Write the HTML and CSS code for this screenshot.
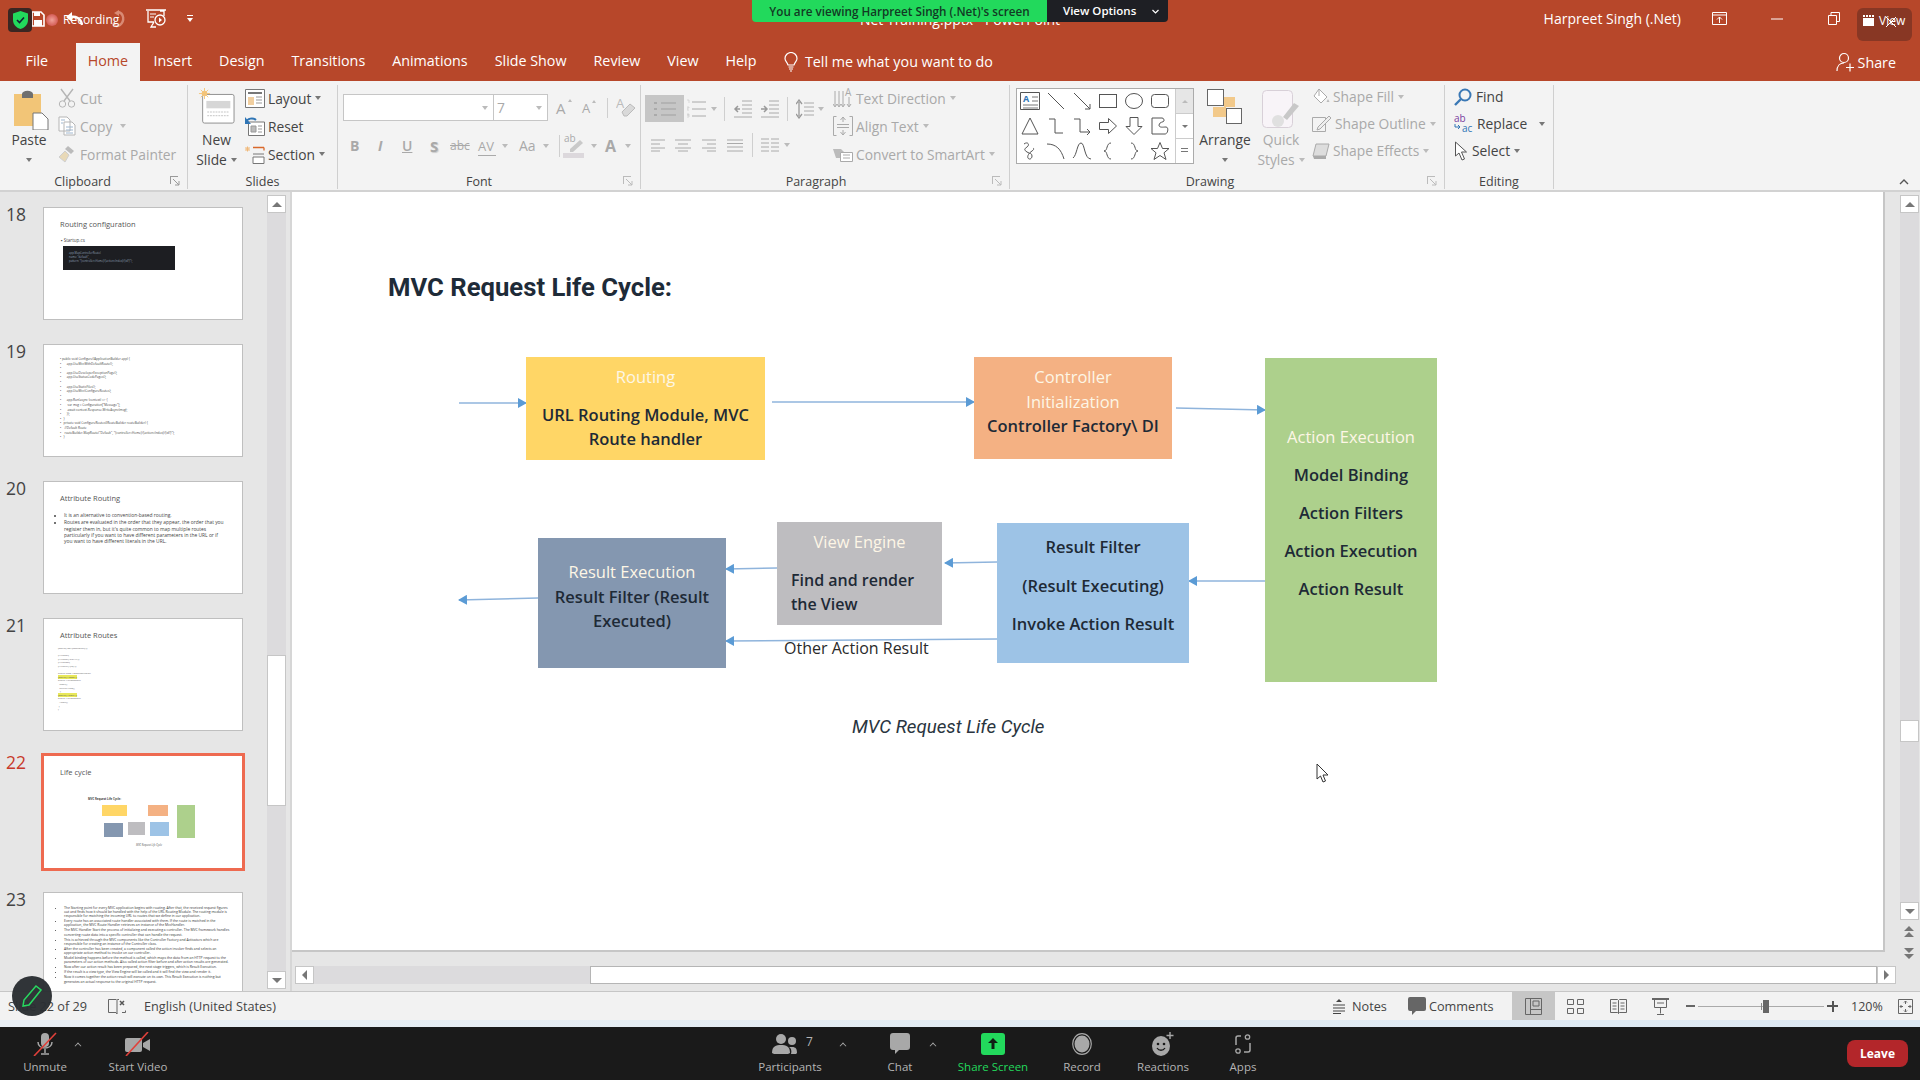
FILE: index.html
```html
<!DOCTYPE html>
<html lang="en">
<head>
<meta charset="utf-8">
<title>Net Training.pptx - PowerPoint</title>
<link rel="stylesheet" href="styles.css">
</head>
<body>
<div class="app">

<header class="titlebar">
  <div class="tb-left">
    <svg class="i-save" width="14" height="16" viewBox="0 0 14 16"><path d="M1 1h9l3 3v11H1z" fill="none" stroke="#fff" stroke-width="1.6"/><rect x="3" y="9" width="8" height="6" fill="#fff"/><rect x="3" y="1" width="6" height="4" fill="#fff"/></svg>
    <svg class="i-undo" width="18" height="16" viewBox="0 0 18 16"><path d="M17 14C16 7 11 5 5 6" fill="none" stroke="#fff" stroke-width="2.4"/><path d="M7 1 1 6l6 5z" fill="#fff"/></svg>
    <svg class="i-redo" width="15" height="18" viewBox="0 0 15 18"><path d="M7 2C13 3 14 11 9 15 6 17 3 16 2 13" fill="none" stroke="#d98a74" stroke-width="2.4"/><path d="M8 0v6L3 3z" fill="#d98a74"/></svg>
    <svg class="i-show" width="20" height="20" viewBox="0 0 20 20"><path d="M0 1h20M2 2v11h6M10 18H5l3-5M14 2h4v5" fill="none" stroke="#fff" stroke-width="1.3"/><circle cx="14" cy="11" r="5" fill="none" stroke="#fff" stroke-width="1.3"/><path d="M13 8.500v5l3-2.500z" fill="#fff"/><path d="M4 5h6M4 8h4" stroke="#fff"/></svg>
    <svg class="i-qa" width="6" height="7" viewBox="0 0 6 7"><path d="M0 0h6v1H0zM0 3h6L3 7z" fill="#fff"/></svg>
  </div>
  <div class="doc-title">Net Training.pptx - PowerPoint</div>
  <div class="tb-right">
    <span class="user">Harpreet Singh (.Net)</span>
    <svg class="i-rd" width="15" height="13" viewBox="0 0 15 13"><path d="M.5.5h14v12H.5zM.5 3h14M7.500 11V5M5 7.500l2.500-2.500L10 7.500" fill="none" stroke="#fff"/></svg>
    <svg class="i-min" width="12" height="2" viewBox="0 0 12 2"><path d="M0 1h12" stroke="#fff"/></svg>
    <svg class="i-max" width="12" height="13" viewBox="0 0 12 13"><path d="M.5 3.500h8v9h-8zM3 3.500V.5h8.500v9H8.500" fill="none" stroke="#fff"/></svg>
  </div>
</header>

<nav class="tabs">
  <span class="tab">File</span>
  <span class="tab tab-on">Home</span>
  <span class="tab">Insert</span>
  <span class="tab">Design</span>
  <span class="tab">Transitions</span>
  <span class="tab">Animations</span>
  <span class="tab">Slide Show</span>
  <span class="tab">Review</span>
  <span class="tab">View</span>
  <span class="tab">Help</span>
  <svg class="i-bulb" width="14" height="20" viewBox="0 0 14 20"><path d="M4 13C3 10 1 9 1 6.500a6 6 0 0 1 12 0C13 9 11 10 10 13z" fill="none" stroke="#fff" stroke-width="1.2"/><path d="M4.500 15h5M5 17h4M6 19h2" stroke="#fff" stroke-width="1.200"/></svg>
  <span class="tell">Tell me what you want to do</span>
  <span class="share">
    <svg width="18" height="20" viewBox="0 0 18 20"><circle cx="8" cy="6" r="4.500" fill="none" stroke="#fff" stroke-width="1.200"/><path d="M1 19c0-5 3-8 7-8M10 15.500h8M14 11.500v8" fill="none" stroke="#fff" stroke-width="1.200"/></svg>
    Share
  </span>
</nav>

<section class="ribbon">
  <div class="group g-clip">
    <div class="g-body">
      <div class="big b-paste">
        <svg width="36" height="40" viewBox="0 0 36 40"><rect x="1" y="4" width="27" height="32" fill="#f2c577"/><path d="M9 4a5 3 0 0 1 11 0v4H9z" fill="#6f6f6f"/><path d="M20 23h9l6 6v11H20z" fill="#fff" stroke="#777"/></svg>
        <span class="big-l">Paste</span>
        <span class="drop"></span>
      </div>
      <div class="stack off">
        <div class="row"><svg class="ic" width="18" height="20" viewBox="0 0 18 20"><path d="M3 1l9 12M15 1L6 13" stroke="#b5b5b5" stroke-width="1.400"/><circle cx="4.500" cy="16" r="3.200" fill="none" stroke="#b5b5b5"/><circle cx="13.500" cy="16" r="3.200" fill="none" stroke="#b5b5b5"/></svg>Cut</div>
        <div class="row"><svg class="ic" width="18" height="20" viewBox="0 0 18 20"><path d="M1 1h8l3 3v11H1zM6 6h8l3 3v10H6z" fill="#fff" stroke="#b5b5b5"/><path d="M8 11h7M8 14h7M8 17h7M3 4h4M3 7h2" stroke="#9fb7d0"/></svg>Copy<span class="drop ml8"></span></div>
        <div class="row"><svg class="ic" width="18" height="18" viewBox="0 0 18 18"><path d="M10 1l6 5-3 3-6-5z" fill="#bbb"/><path d="M7 6l4 4-4 7-6-5z" fill="#e8d9b8" stroke="#cfcfcf"/></svg>Format Painter</div>
      </div>
    </div>
    <div class="g-label">Clipboard<svg class="launch" width="10" height="10" viewBox="0 0 10 10"><path d="M0 .5h8M.5 0v8M3 3l6 6M9 5v4H5" fill="none" stroke="#999"/></svg></div>
  </div>

  <div class="group g-slides">
    <div class="g-body">
      <div class="big b-new">
        <svg width="37" height="36" viewBox="0 0 40 39"><rect x="5" y="7" width="34" height="31" rx="2" fill="#fff" stroke="#8a8a8a"/><rect x="9" y="14" width="26" height="8" fill="#d6d6d6"/><path d="M10 26h24M10 30h24" stroke="#c0c0c0" stroke-dasharray="2 1"/><circle cx="7" cy="6" r="3" fill="#f3c47a"/><path d="M7 0v12M1 6h12M3 2l8 8M11 2l-8 8" stroke="#f3c47a"/></svg>
        <span class="big-l">New</span>
        <span class="big-l">Slide<span class="drop ml3"></span></span>
      </div>
      <div class="stack">
        <div class="row"><svg class="ic2" width="20" height="19" viewBox="0 0 20 19"><path d="M.5.5h19v18H.5z" fill="#fff" stroke="#777"/><path d="M3 4h14" stroke="#777" stroke-width="2"/><path d="M3 8h6v8H3z" fill="#f1cfa0"/><path d="M11 8h6M11 11h6M11 14h6" stroke="#999"/></svg>Layout<span class="drop ml3"></span></div>
        <div class="row"><svg class="ic2" width="20" height="19" viewBox="0 0 20 19"><path d="M3.500 5h16v13.500h-16z" fill="#fff" stroke="#777"/><path d="M6 9h5v6H6zM13 9h4M13 12h4M13 15h4" fill="#bbb" stroke="#999"/><path d="M1 5a6 5 0 0 1 10-2" fill="none" stroke="#2f75b5" stroke-width="2"/><path d="M0 0v7h6z" fill="#2f75b5"/></svg>Reset</div>
        <div class="row"><svg class="ic2" width="20" height="19" viewBox="0 0 20 19"><path d="M0 4h5M2.500 1.500v5M.500 2l4 4M4.500 2l-4 4" stroke="#f0b878"/><path d="M8 2.500h11M19 2.500v3" fill="none" stroke="#d9682b" stroke-width="1.300"/><path d="M8 9h11M8 12h11v6.500H8z" fill="#fff" stroke="#777"/></svg>Section<span class="drop ml3"></span></div>
      </div>
    </div>
    <div class="g-label">Slides</div>
  </div>

  <div class="group g-font">
    <div class="g-body col off">
      <div class="font-top">
        <div class="combo c-name"><span class="drop"></span></div>
        <div class="combo c-size">7<span class="drop"></span></div>
        <span class="big-a">A<i class="up"></i></span>
        <span class="small-a">A<i class="up"></i></span>
        <span class="vsep s-font"></span>
        <svg class="i-clear" width="20" height="21" viewBox="0 0 20 21"><text x="0" y="11" font-size="13" fill="#bbb" font-family="Open Sans">A</text><path d="M6 15l8-8 5 4-8 8H8z" fill="#d9d9d9" stroke="#bbb"/></svg>
      </div>
      <div class="font-bot">
        <b class="f-b">B</b><i class="f-i">I</i><u class="f-u">U</u><b class="f-s">S</b><s class="f-abc">abc</s>
        <span class="f-av">AV<i class="av-line"></i></span><span class="drop"></span>
        <span class="f-aa">Aa</span><span class="drop"></span>
        <span class="vsep s-font2"></span>
        <svg class="i-hl" width="22" height="25" viewBox="0 0 22 25"><text x="1" y="9" font-size="10" fill="#aaa" font-family="Open Sans">ab</text><path d="M7 16l10-9 3 3-10 9H7z" fill="#c9c9c9"/><rect x="0" y="20" width="21" height="5" fill="#dcd8dc"/></svg>
        <span class="drop"></span>
        <b class="f-color">A</b><span class="drop"></span>
      </div>
    </div>
    <div class="g-label">Font<svg class="launch faint" width="10" height="10" viewBox="0 0 10 10"><path d="M0 .5h8M.5 0v8M3 3l6 6M9 5v4H5" fill="none" stroke="#bbb"/></svg></div>
  </div>

  <div class="group g-para">
    <div class="g-body">
      <div class="para-grid off">
        <div class="para-top">
          <span class="pbtn-on"><svg width="22" height="16" viewBox="0 0 22 16"><path d="M0 2h3M0 8h3M0 14h3" stroke="#aaa" stroke-width="2"/><path d="M7 2h15M7 8h15M7 14h15" stroke="#a0a0a0"/></svg></span>
          <svg class="i-num" width="20" height="20" viewBox="0 0 20 20"><path d="M5 3h14M5 10h14M5 17h14" stroke="#aaa"/><path d="M0 1h2v3M0 8h2v1H0v2h2M0 15h2v1H0h2v2H0" fill="none" stroke="#ccc" stroke-width=".7"/></svg>
          <span class="drop"></span>
          <span class="vsep s-p1"></span>
          <svg class="i-ind" width="19" height="18" viewBox="0 0 19 18"><path d="M9 1h10M9 5h10M9 9h10M9 13h10M1 17h18" stroke="#aaa"/><path d="M7 9H2M5 6L2 9l3 3" fill="none" stroke="#999" stroke-width="1.500"/></svg>
          <svg class="i-ind2" width="19" height="18" viewBox="0 0 19 18"><path d="M9 1h10M9 5h10M9 9h10M9 13h10M1 17h18" stroke="#aaa"/><path d="M1 9h5M4 6l3 3-3 3" fill="none" stroke="#999" stroke-width="1.500"/></svg>
          <span class="vsep s-p2"></span>
          <svg class="i-ls" width="18" height="20" viewBox="0 0 18 20"><path d="M8 4h10M8 8h10M8 12h10M8 16h10" stroke="#aaa"/><path d="M3 3v14M0 5l3-4 3 4M0 15l3 4 3-4" fill="none" stroke="#999" stroke-width="1.300"/></svg>
          <span class="drop"></span>
        </div>
        <div class="para-bot">
          <svg class="al1" width="14" height="13" viewBox="0 0 14 13"><path d="M0 1h14M0 5h9M0 9h14M0 12h9" stroke="#aaa"/></svg>
          <svg class="al2" width="16" height="13" viewBox="0 0 16 13"><path d="M0 1h16M3 5h10M0 9h16M3 12h10" stroke="#aaa"/></svg>
          <svg class="al3" width="14" height="13" viewBox="0 0 14 13"><path d="M0 1h14M5 5h9M0 9h14M5 12h9" stroke="#aaa"/></svg>
          <svg class="al4" width="16" height="13" viewBox="0 0 16 13"><path d="M0 1h16M0 4.500h16M0 8h16M0 12h16" stroke="#aaa"/></svg>
          <span class="vsep s-p3"></span>
          <svg class="i-col" width="18" height="14" viewBox="0 0 18 14"><path d="M0 1h8M10 1h8M0 5h8M10 5h8M0 9h8M10 9h8M0 13h8M10 13h8" stroke="#aaa"/></svg>
          <span class="drop"></span>
        </div>
      </div>
      <div class="stack off st-para">
        <div class="row"><svg class="ic2" width="20" height="22" viewBox="0 0 20 22"><path d="M2 4v15M6 4v15M10 4v15" stroke="#aaa"/><path d="M0 17l2 3 2-3M4 17l2 3 2-3M8 17l2 3 2-3" fill="none" stroke="#aaa"/><text x="12" y="9" font-size="10" fill="#aaa" font-family="Open Sans">A</text><path d="M16 10v9M14 17l2 3 2-3" fill="none" stroke="#aaa"/></svg>Text Direction<span class="drop ml3"></span></div>
        <div class="row"><svg class="ic2" width="20" height="20" viewBox="0 0 20 20"><path d="M3.500.5h-3v19h3M16.500.5h3v19h-3" fill="none" stroke="#aaa"/><path d="M10 1v5M7.500 4L10 1l2.500 3M10 19v-5M7.500 16l2.500 3 2.500-3M4 8.500h12M4 11.500h12" fill="none" stroke="#aaa"/></svg>Align Text<span class="drop ml3"></span></div>
        <div class="row"><svg class="ic2" width="20" height="16" viewBox="0 0 20 16"><path d="M0 3h8l5 5-5 4H3z" fill="#bbb"/><path d="M7.500 6.500h12v9h-12z" fill="#fff" stroke="#aaa"/><path d="M10 9h7M10 12h7" stroke="#aaa"/></svg>Convert to SmartArt<span class="drop ml3"></span></div>
      </div>
    </div>
    <div class="g-label">Paragraph<svg class="launch faint" width="10" height="10" viewBox="0 0 10 10"><path d="M0 .5h8M.5 0v8M3 3l6 6M9 5v4H5" fill="none" stroke="#bbb"/></svg></div>
  </div>

  <div class="group g-draw">
    <div class="g-body">
      <div class="gallery">
        <div class="shapes">
          <svg width="20" height="20" viewBox="0 0 20 20"><path d="M.5 1.500h19v17H.5z" fill="#fff" stroke="#555"/><path d="M12 6h6M12 10h6M3 14h15M3 17h15" stroke="#777"/><text x="3" y="11" font-size="9" font-weight="700" fill="#2f75b5" font-family="Open Sans">A</text></svg>
          <svg width="20" height="20" viewBox="0 0 20 20"><path d="M2 2l16 16" stroke="#555"/></svg>
          <svg width="20" height="20" viewBox="0 0 20 20"><path d="M2 2l16 16M13 18h5v-5" fill="none" stroke="#555"/></svg>
          <svg width="20" height="20" viewBox="0 0 20 20"><rect x="1.500" y="3.500" width="17" height="13" fill="none" stroke="#555"/></svg>
          <svg width="20" height="20" viewBox="0 0 20 20"><ellipse cx="10" cy="10" rx="8.500" ry="7.500" fill="none" stroke="#555"/></svg>
          <svg width="20" height="20" viewBox="0 0 20 20"><rect x="1.500" y="3.500" width="17" height="13" rx="3" fill="none" stroke="#555"/></svg>
          <svg width="20" height="20" viewBox="0 0 20 20"><path d="M10 2l8 16H2z" fill="none" stroke="#555"/></svg>
          <svg width="20" height="20" viewBox="0 0 20 20"><path d="M3 3h6v14h8" fill="none" stroke="#555"/></svg>
          <svg width="20" height="20" viewBox="0 0 20 20"><path d="M2 3h6v13h10M15 13l3 3-3 3" fill="none" stroke="#555"/></svg>
          <svg width="20" height="20" viewBox="0 0 20 20"><path d="M1.500 6.500h9v-4l8 7.500-8 7.500v-4h-9z" fill="none" stroke="#555"/></svg>
          <svg width="20" height="20" viewBox="0 0 20 20"><path d="M6 1.500h8v9h4l-8 8-8-8h4z" fill="none" stroke="#555"/></svg>
          <svg width="20" height="20" viewBox="0 0 20 20"><path d="M2 18V2h10c2 0 2 2 2 3s-5 1-5 4 4 2 7 2 2 7-1 7z" fill="none" stroke="#555"/></svg>
          <svg width="20" height="20" viewBox="0 0 20 20"><path d="M4 3c4-3 6 1 3 3S4 9 7 11s5 1 5 4-3 4-4 2 1-5 4-7 1-3 1-3" fill="none" stroke="#555"/></svg>
          <svg width="20" height="20" viewBox="0 0 20 20"><path d="M1 3c9 0 14 5 17 15" fill="none" stroke="#555"/></svg>
          <svg width="20" height="20" viewBox="0 0 20 20"><path d="M1 17C5 14 5 2 9 2s3 16 10 16" fill="none" stroke="#555"/></svg>
          <svg width="20" height="20" viewBox="0 0 20 20"><path d="M13 2c-5 0-3 8-7 8 4 0 2 8 7 8" fill="none" stroke="#555"/></svg>
          <svg width="20" height="20" viewBox="0 0 20 20"><path d="M7 2c5 0 3 8 7 8-4 0-2 8-7 8" fill="none" stroke="#555"/></svg>
          <svg width="20" height="20" viewBox="0 0 20 20"><path d="M10 1.500l2.500 6h6.500l-5 4.300 2 6.700-6-4-6 4 2-6.700-5-4.300h6.500z" fill="none" stroke="#555"/></svg>
        </div>
        <div class="gal-scroll">
          <span class="gs gs-dim"><i class="tri-up"></i></span>
          <span class="gs gs-w"><i class="tri-dn"></i></span>
          <span class="gs gs-w"><i class="bar-dn"></i></span>
        </div>
      </div>
      <div class="big b-arr">
        <svg width="36" height="35" viewBox="0 0 36 35"><rect x="17" y="8" width="11" height="10" fill="#f2c98a"/><rect x="6" y="18" width="13" height="10" fill="#f2c98a"/><rect x=".5" y=".5" width="16" height="16" fill="#fff" stroke="#666"/><rect x="19.500" y="19.500" width="15" height="15" fill="#fff" stroke="#666"/></svg>
        <span class="big-l">Arrange</span>
        <span class="drop"></span>
      </div>
      <div class="big b-qs off">
        <svg width="38" height="39" viewBox="0 0 38 39"><rect x=".5" y=".5" width="30" height="37" rx="4" fill="#f8f4f8" stroke="#d8d0d8"/><path d="M37 16L25 30l-4-3 11-14z" fill="#c8c8c8"/><circle cx="16" cy="31" r="6" fill="#e0e0e0"/></svg>
        <span class="big-l">Quick</span>
        <span class="big-l">Styles<span class="drop ml3"></span></span>
      </div>
      <div class="stack off st-shape">
        <div class="row"><svg class="ic3" width="18" height="18" viewBox="0 0 18 18"><path d="M7 1l8 8-6 6-7-7z" fill="#fff" stroke="#aaa"/><path d="M7 1V8" stroke="#aaa"/><path d="M16 11l1.500 3h-3z" fill="#bbb"/></svg>Shape Fill<span class="drop ml3"></span></div>
        <div class="row"><svg class="ic3" width="20" height="18" viewBox="0 0 20 18"><path d="M.5 2.500h13v14H.5z" fill="none" stroke="#aaa"/><path d="M6 12L17 1l2 2L8 14l-3 1z" fill="#eee" stroke="#aaa"/></svg>Shape Outline<span class="drop ml3"></span></div>
        <div class="row"><svg class="ic3" width="18" height="18" viewBox="0 0 18 18"><path d="M4 2h13l-3 12H1z" fill="#ddd" stroke="#aaa"/><path d="M1 14h13v3H2z" fill="#aaa"/></svg>Shape Effects<span class="drop ml3"></span></div>
      </div>
    </div>
    <div class="g-label">Drawing<svg class="launch faint" width="10" height="10" viewBox="0 0 10 10"><path d="M0 .5h8M.5 0v8M3 3l6 6M9 5v4H5" fill="none" stroke="#bbb"/></svg></div>
  </div>

  <div class="group g-edit">
    <div class="g-body">
      <div class="stack st-edit">
        <div class="row"><svg class="ic4" width="18" height="18" viewBox="0 0 18 18"><circle cx="11" cy="7" r="5.500" fill="none" stroke="#3a78b5" stroke-width="2"/><path d="M7 11l-6 6" stroke="#3a78b5" stroke-width="2.400"/></svg>Find</div>
        <div class="row"><svg class="ic4" width="19" height="19" viewBox="0 0 19 19"><text x="0" y="8" font-size="10" fill="#7a3fa0" font-family="Open Sans">ab</text><text x="8" y="18" font-size="10" fill="#2f75b5" font-family="Open Sans">ac</text><path d="M1 10v3h5M4 11l2 2-2 2" fill="none" stroke="#2f75b5"/></svg>Replace<span class="drop ml12"></span></div>
        <div class="row"><svg class="ic4" width="14" height="20" viewBox="0 0 14 20"><path d="M1.500 1v14l3.500-3 3 7 2.500-1-3-7h5z" fill="#fff" stroke="#555"/></svg>Select<span class="drop ml3"></span></div>
      </div>
    </div>
    <div class="g-label">Editing</div>
  </div>

  <svg class="collapse" width="10" height="6" viewBox="0 0 10 6"><path d="M1 5l4-4 4 4" fill="none" stroke="#555" stroke-width="1.400"/></svg>
</section>

<main class="workspace">
  <aside class="sidebar">
    <div class="thumbs">
      <div class="trow"><span class="num">18</span>
        <div class="thumb">
          <div class="th-title">Routing configuration</div>
          <div class="th-bullet">▪ Startup.cs</div>
          <div class="th-code">app.MapControllerRoute(<br>name: "default",<br>pattern: "{controller=Home}/{action=Index}/{id?}");</div>
        </div>
      </div>
      <div class="trow"><span class="num">19</span>
        <div class="thumb">
          <div class="th-lines">• public void Configure(IApplicationBuilder app) {<br>•&nbsp;&nbsp;&nbsp;&nbsp;&nbsp;&nbsp;&nbsp;app.UseMvcWithDefaultRoute();<br>•<br>•&nbsp;&nbsp;&nbsp;&nbsp;&nbsp;&nbsp;&nbsp;app.UseDeveloperExceptionPage();<br>•&nbsp;&nbsp;&nbsp;&nbsp;&nbsp;&nbsp;&nbsp;app.UseStatusCodePages();<br>•<br>•&nbsp;&nbsp;&nbsp;&nbsp;&nbsp;&nbsp;&nbsp;app.UseStaticFiles();<br>•&nbsp;&nbsp;&nbsp;&nbsp;&nbsp;&nbsp;&nbsp;app.UseMvc(ConfigureRoutes);<br>•<br>•&nbsp;&nbsp;&nbsp;&nbsp;&nbsp;&nbsp;&nbsp;app.Run(async (context) =&gt; {<br>•&nbsp;&nbsp;&nbsp;&nbsp;&nbsp;&nbsp;&nbsp;&nbsp;var msg = Configuration["Message"];<br>•&nbsp;&nbsp;&nbsp;&nbsp;&nbsp;&nbsp;&nbsp;&nbsp;await context.Response.WriteAsync(msg);<br>•&nbsp;&nbsp;&nbsp;&nbsp;&nbsp;&nbsp;&nbsp;});<br>•&nbsp;&nbsp;&nbsp;}<br>•&nbsp;&nbsp;&nbsp;private void ConfigureRoutes(IRouteBuilder routeBuilder) {<br>•&nbsp;&nbsp;&nbsp;&nbsp;//Default Route<br>•&nbsp;&nbsp;&nbsp;&nbsp;routeBuilder.MapRoute("Default", "{controller=Home}/{action=Index}/{id?}");<br>•&nbsp;&nbsp;&nbsp;}</div>
        </div>
      </div>
      <div class="trow"><span class="num">20</span>
        <div class="thumb">
          <div class="th-title">Attribute Routing</div>
          <ul class="th-list"><li>It is an alternative to convention-based routing.</li><li>Routes are evaluated in the order that they appear, the order that you<br>register them in, but it's quite common to map multiple routes<br>particularly if you want to have different parameters in the URL or if<br>you want to have different literals in the URL.</li></ul>
        </div>
      </div>
      <div class="trow"><span class="num">21</span>
        <div class="thumb">
          <div class="th-title">Attribute Routes</div>
          <div class="th-tiny">[Route("api/[controller]")]<br>&nbsp;<br>[HttpGet]<br>[HttpGet("GetAll")]<br>[HttpPost]<br>[HttpPut("{id}")]<br>&nbsp;<br>public class HomeController<br><mark>[Route("Home")]</mark><br>public IActionResult<br>&nbsp;&nbsp;Index()<br>&nbsp;&nbsp;return View();<br>&nbsp;&nbsp;&nbsp;}<br><mark>[Route("About")]</mark><br>public IActionResult<br>&nbsp;&nbsp;About()<br>&nbsp;}<br>}</div>
        </div>
      </div>
      <div class="trow trow-on"><span class="num">22</span>
        <div class="thumb thumb-on">
          <div class="th-title">Life cycle</div>
          <div class="mini-t">MVC Request Life Cycle:</div>
          <span class="mini m-y"></span><span class="mini m-o"></span><span class="mini m-g"></span><span class="mini m-b"></span><span class="mini m-s"></span><span class="mini m-d"></span>
          <div class="mini-c">MVC Request Life Cycle</div>
        </div>
      </div>
      <div class="trow"><span class="num">23</span>
        <div class="thumb thumb-long">
          <ul class="th-dense"><li>The Starting point for every MVC application begins with routing. After that, the received request figures out and finds how it should be handled with the help of the URL Routing Module. The routing module is responsible for matching the incoming URL to routes that we define in our application.</li><li>Every route has an associated route handler associated with them. If the route is matched in the application, the MVC Route Handler retrieves an instance of the MvcHandler.</li><li>The MVC Handler Start the process of initializing and executing a controller. The MVC framework handles converting route data into a specific controller that can handle the request.</li><li>This is achieved through the MVC components like the Controller Factory and Activators which are responsible for creating an instance of the Controller class.</li><li>After the controller has been created, a component called the action invoker finds and selects an appropriate action method to invoke on our controller.</li><li>Model binding happens before the method is called, which maps the data from an HTTP request to the parameters of our action methods. Also called action filter before and after action results are generated.</li><li>Now after our action result has been prepared, the next stage triggers, which is Result Execution.</li><li>If the result is a view type, the View Engine will be called and it will find the view and render it.</li><li>Now it comes together the action result will execute on its own. This Result Execution is nothing but generates an actual response to the original HTTP request.</li></ul>
        </div>
      </div>
    </div>
    <div class="vbar vbar-side">
      <span class="sbtn sb-up"><i class="tri-up"></i></span>
      <span class="sthumb"></span>
      <span class="sbtn sb-dn"><i class="tri-dn"></i></span>
    </div>
  </aside>

  <section class="editor">
    <div class="editor-top">
      <div class="canvas">
        <h1 class="d-title">MVC Request Life Cycle:</h1>
        <svg class="d-arrows" width="1593" height="760" viewBox="0 0 1593 760">
          <defs><marker id="ah" markerWidth="9" markerHeight="10" refX="8" refY="5" orient="auto" markerUnits="userSpaceOnUse"><path d="M0 0l9 5-9 5z" fill="#5b9bd5"/></marker></defs>
          <g fill="none" stroke="#8fb4dc" stroke-width="1.600">
            <path d="M167 211L234 211" marker-end="url(#ah)"/>
            <path d="M480 210L682 210" marker-end="url(#ah)"/>
            <path d="M884 216L973 218" marker-end="url(#ah)"/>
            <path d="M973 389L897 389" marker-end="url(#ah)"/>
            <path d="M705 370L653 371" marker-end="url(#ah)"/>
            <path d="M485 376L434 377" marker-end="url(#ah)"/>
            <path d="M705 447L434 449" marker-end="url(#ah)"/>
            <path d="M246 406L167 408" marker-end="url(#ah)"/>
          </g>
        </svg>
        <div class="node n-route"><p class="lt gap">Routing</p><p>URL Routing Module, MVC</p><p>Route handler</p></div>
        <div class="node n-ctrl"><p class="lt">Controller</p><p class="lt">Initialization</p><p>Controller Factory\ DI</p></div>
        <div class="node n-action"><p class="lt gap">Action Execution</p><p class="gap">Model Binding</p><p class="gap">Action Filters</p><p class="gap">Action Execution</p><p>Action Result</p></div>
        <div class="node n-filter"><p class="gap">Result Filter</p><p class="gap">(Result Executing)</p><p>Invoke Action Result</p></div>
        <div class="node n-view"><p class="lt gap">View Engine</p><p class="left">Find and render</p><p class="left">the View</p></div>
        <div class="node n-exec"><p class="lt">Result Execution</p><p>Result Filter (Result</p><p>Executed)</p></div>
        <div class="d-other">Other Action Result</div>
        <div class="d-cap">MVC Request Life Cycle</div>
        <svg class="d-cursor" width="13" height="20" viewBox="0 0 13 20"><path d="M1 1v15l3.500-3 2.500 6 2.500-1-2.500-6H12z" fill="#fff" stroke="#333"/></svg>
      </div>
      <div class="vbar vbar-main">
        <span class="sbtn sb-up"><i class="tri-up"></i></span>
        <span class="sthumb st-main"></span>
        <span class="sbtn sb-dn"><i class="tri-dn"></i></span>
        <svg class="dbl d-first" width="10" height="12" viewBox="0 0 10 12"><path d="M5 0l5 5H0zM5 6l5 5H0z" fill="#777"/></svg>
        <svg class="dbl" width="10" height="12" viewBox="0 0 10 12"><path d="M0 1h10L5 6zM0 7h10l-5 5z" fill="#777"/></svg>
      </div>
    </div>
    <div class="hbar">
      <span class="sbtn sh"><i class="tri-lt"></i></span>
      <span class="htrack"></span>
      <span class="hthumb"></span>
      <span class="sbtn sh"><i class="tri-rt"></i></span>
    </div>
  </section>
</main>

<footer class="status">
  <span class="st-slide">Slide 22 of 29</span>
  <svg class="i-spell" width="18" height="19" viewBox="0 0 18 19"><path d="M8 2.500H.5v13H8l1 1.500M9 2v15M9.500 2.500H11M14 15.500h3.500v-2" fill="none" stroke="#666"/><path d="M12 4l4 4M16 4l-4 4" stroke="#555" stroke-width="1.500"/></svg>
  <span class="st-lang">English (United States)</span>
  <span class="st-notes"><svg width="12" height="16" viewBox="0 0 12 16"><path d="M3 4l3-3 3 3z" fill="#444"/><path d="M0 7h12M0 10h12M0 13h12M0 15.500h8" stroke="#444"/></svg>Notes</span>
  <span class="st-comments"><svg width="18" height="19" viewBox="0 0 18 19"><path d="M2 0h14a2 2 0 0 1 2 2v10a2 2 0 0 1-2 2H8l-4 4v-4H2a2 2 0 0 1-2-2V2a2 2 0 0 1 2-2z" fill="#666"/></svg>Comments</span>
  <span class="vw vw-on"><svg width="17" height="17" viewBox="0 0 17 17"><path d="M.5.5h16v16H.5zM5.500.5v16M5.500 11.500h11M8 3h6v5H8z" fill="none" stroke="#666"/></svg></span>
  <span class="vw"><svg width="17" height="17" viewBox="0 0 17 17"><path d="M.5 1.500h6v5h-6zM10.500 1.500h6v5h-6zM.5 10.500h6v5h-6zM10.500 10.500h6v5h-6z" fill="none" stroke="#666"/></svg></span>
  <span class="vw"><svg width="17" height="17" viewBox="0 0 17 17"><path d="M.5 1.500h7l1 1 1-1h7v13h-7l-1 1-1-1h-7zM8.500 2.500v13M2.500 5h4M2.500 8h4M2.500 11h4M10.500 5h4M10.500 8h4M10.500 11h4" fill="none" stroke="#666"/></svg></span>
  <span class="vw"><svg width="17" height="17" viewBox="0 0 17 17"><path d="M0 1h17" stroke="#666" stroke-width="2"/><path d="M2.500 1.500v8h12v-8M8.500 9.500v6M5 16.500h7M5 5h7" fill="none" stroke="#666"/></svg></span>
  <span class="z-minus"></span>
  <span class="z-slider"><i class="z-tick"></i><i class="z-knob"></i></span>
  <span class="z-plus"></span>
  <span class="z-pct">120%</span>
  <svg class="i-fit" width="15" height="15" viewBox="0 0 15 15"><path d="M.5.500h14v14H.5zM7.500 2v3M6 3.500L7.500 2 9 3.500M7.500 13v-3M6 11.500L7.500 13 9 11.500M2 7.500h3M3.500 6L2 7.500 3.500 9M13 7.500h-3M11.500 6 13 7.500 11.500 9" fill="none" stroke="#666"/></svg>
</footer>
<div class="strip"></div>

<footer class="meet">
  <div class="tool t-mute">
    <svg width="24" height="24" viewBox="0 0 24 24"><rect x="8" y="1" width="8" height="14" rx="4" fill="#a8a8a8"/><path d="M5 10c0 8 14 8 14 0M12 17v4M8 22h8" fill="none" stroke="#a8a8a8" stroke-width="1.500"/><path d="M1 24L23 1" stroke="#e0403a" stroke-width="1.600"/></svg>
    <span>Unmute</span><i class="caret c-m"></i>
  </div>
  <div class="tool t-video">
    <svg width="26" height="24" viewBox="0 0 26 24"><rect x="0" y="6" width="17" height="14" rx="2" fill="#a8a8a8"/><path d="M18 11l7-4v12l-7-4z" fill="#a8a8a8"/><path d="M1 24L23 0" stroke="#e0403a" stroke-width="1.600"/></svg>
    <span>Start Video</span>
  </div>
  <div class="tool t-part">
    <svg width="34" height="22" viewBox="0 0 34 22"><circle cx="9" cy="6" r="5" fill="#a8a8a8"/><circle cx="20" cy="8" r="4" fill="#a8a8a8"/><path d="M0 20c0-7 4-8 9-8s9 1 9 8l-2 1H2z" fill="#a8a8a8"/><path d="M20 14c4 0 5 2 5 6l-1 1h-5c1-3 0-6-2-7z" fill="#a8a8a8"/></svg>
    <span>Participants</span><em class="count">7</em><i class="caret c-p"></i>
  </div>
  <div class="tool t-chat">
    <svg width="20" height="22" viewBox="0 0 20 22"><path d="M3 0h14a3 3 0 0 1 3 3v11a3 3 0 0 1-3 3H9l-4 4v-4H3a3 3 0 0 1-3-3V3a3 3 0 0 1 3-3z" fill="#a8a8a8"/></svg>
    <span>Chat</span><i class="caret c-c"></i>
  </div>
  <div class="tool t-share">
    <svg width="24" height="22" viewBox="0 0 24 22"><rect width="24" height="22" rx="3" fill="#22d95c"/><path d="M12 5l5 5h-3.500v6h-3v-6H7z" fill="#0f1f14"/></svg>
    <span>Share Screen</span>
  </div>
  <div class="tool t-rec">
    <svg width="20" height="22" viewBox="0 0 20 22"><ellipse cx="10" cy="11" rx="9.300" ry="10.300" fill="none" stroke="#a8a8a8" stroke-width="1.200"/><ellipse cx="10" cy="11" rx="7.500" ry="8.500" fill="#a8a8a8"/></svg>
    <span>Record</span>
  </div>
  <div class="tool t-react">
    <svg width="22" height="24" viewBox="0 0 22 24"><ellipse cx="9" cy="14" rx="9" ry="10" fill="#a8a8a8"/><circle cx="6" cy="12" r="1.300" fill="#1a1a1a"/><circle cx="12" cy="12" r="1.300" fill="#1a1a1a"/><path d="M5 16c2 3 6 3 8 0" fill="none" stroke="#1a1a1a" stroke-width="1.300"/><path d="M18 0v7M14.500 3.500h7" stroke="#a8a8a8" stroke-width="1.400"/></svg>
    <span>Reactions</span>
  </div>
  <div class="tool t-apps">
    <svg width="16" height="20" viewBox="0 0 16 20"><path d="M6 2H3a2 2 0 0 0-2 2v7M15 9v7a2 2 0 0 1-2 2h-4" fill="none" stroke="#a8a8a8" stroke-width="1.500"/><circle cx="12.500" cy="3" r="2.200" fill="none" stroke="#a8a8a8" stroke-width="1.300"/><circle cx="3" cy="17" r="2.200" fill="none" stroke="#a8a8a8" stroke-width="1.300"/></svg>
    <span>Apps</span>
  </div>
  <button class="leave" type="button">Leave</button>
</footer>

<div class="ov-shield"><svg width="15" height="18" viewBox="0 0 15 18"><path d="M7.500 0L15 2.500V9c0 5-4 8-7.500 9C4 17 0 14 0 9V2.500z" fill="#22d95c"/><path d="M4 9l2.500 2.500L11 6.500" fill="none" stroke="#123" stroke-width="1.600"/></svg></div>
<div class="ov-rec"><i class="rec-dot"></i>Recording</div>
<div class="ov-banner"><span class="bn-msg">You are viewing Harpreet Singh (.Net)'s screen</span><span class="bn-opt">View Options<svg width="7" height="5" viewBox="0 0 7 5"><path d="M.5 1l3 3 3-3" fill="none" stroke="#fff" stroke-width="1.200"/></svg></span></div>
<div class="ov-view"><svg width="11" height="11" viewBox="0 0 11 11"><path d="M0 3h11v8H0zM0 0h2v2H0zM3 0h2v2H3zM6 0h2v2H6zM9 0h2v2H9z" fill="#fff"/></svg><span>View</span><svg class="ov-x" width="12" height="12" viewBox="0 0 12 12"><path d="M1 1l10 10M11 1L1 11" stroke="#fff"/></svg></div>
<div class="ov-pen"><svg width="20" height="22" viewBox="0 0 20 22"><path d="M14 1l5 4L7 20l-6 1 1-6z" fill="none" stroke="#22d95c" stroke-width="1.500"/></svg></div>

</div>
</body>
</html>
```
FILE: styles.css
```css
* { box-sizing: border-box; }
html, body { margin: 0; height: 100%; overflow: hidden; }
body { font-family: "Open Sans", "Noto Sans", sans-serif; font-size: 13.800px; color: #444; background: #f3f3f3; }
.app { position: relative; width: 1920px; height: 1080px; display: flex; flex-direction: column; overflow: hidden; }
svg { display: block; flex: none; }

/* title bar */
.titlebar { height: 43px; background: #b7472a; display: grid; grid-template-columns: 1fr auto 1fr; color: #fff; flex: none; }
.tb-left { display: flex; align-items: center; padding: 0 0 6px 31px; }
.i-undo { margin-left: 20px; }
.i-redo { margin-left: 28px; }
.i-show { margin-left: 20px; }
.i-qa { margin-left: 21px; }
.doc-title { font-size: 14px; line-height: 20px; padding-top: 10px; }
.tb-right { display: flex; align-items: center; justify-content: flex-end; padding: 0 80px 6px 0; }
.user { font-size: 14px; }
.i-rd { margin-left: 31px; }
.i-min { margin-left: 44px; }
.i-max { margin-left: 45px; }

/* tabs */
.tabs { height: 38px; background: #b7472a; display: flex; align-items: center; color: #fff; font-size: 14.300px; padding-left: 12px; flex: none; }
.tab { height: 38px; line-height: 36px; padding: 0 13.500px; }
.tab-on { background: #f3f3f3; color: #b7472a; margin-left: 14px; padding: 0 12px; }
.i-bulb { margin-left: 14px; margin-top: 0; }
.tell { margin-left: 7px; line-height: 36px; }
.share { margin-left: auto; margin-right: 24px; display: flex; align-items: center; gap: 4px; }

/* ribbon */
.ribbon { position: relative; height: 111px; background: #f3f3f3; border-bottom: 2px solid #d2d2d2; display: flex; padding-top: 4px; flex: none; }
.group { height: 104px; border-right: 1px solid #cfcfcf; display: flex; flex-direction: column; flex: none; }
.g-clip { width: 188px; }
.g-slides { width: 150px; }
.g-font { width: 303px; }
.g-para { width: 369px; }
.g-draw { width: 435px; }
.g-edit { width: 109px; }
.g-body { height: 90px; display: flex; }
.g-label { position: relative; height: 14px; line-height: 14px; margin-top: 1px; text-align: center; font-size: 12.500px; color: #444; }
.g-clip .g-label { padding-right: 22px; }
.g-font .g-label { padding-right: 20px; }
.g-para .g-label { padding-right: 18px; }
.g-draw .g-label { padding-right: 34px; }
.launch { position: absolute; right: 7px; top: 1px; }
.col { flex-direction: column; }
.off { color: #a9a9a9; }
.big { display: flex; flex-direction: column; align-items: center; flex: none; }
.big-l { line-height: 20px; height: 20px; display: flex; align-items: center; }
.b-paste { width: 58px; padding-top: 5px; }
.b-paste > svg { margin-left: 4px; }
.b-new { width: 57px; padding-top: 3px; }
.b-new > svg { margin-bottom: 6px; }
.stack { display: flex; flex-direction: column; white-space: nowrap; margin-top: -1px; }
.row { height: 28px; display: flex; align-items: center; }
.ic { margin-right: 4px; }
.ic2 { margin-right: 3px; }
.ic3 { margin-right: 3px; }
.ic4 { margin-right: 4px; }
.drop { display: inline-block; width: 0; height: 0; border: 3.500px solid transparent; border-top: 4px solid #777; border-bottom: 0; flex: none; }
.big > .drop { margin-top: 8px; }
.ml3 { margin-left: 4px; }
.ml8 { margin-left: 8px; }
.ml12 { margin-left: 12px; }
.off .drop { border-top-color: #bbb; }
.vsep { width: 1px; background: #cfcfcf; display: block; flex: none; }

.font-top { display: flex; align-items: center; padding: 9px 0 0 5px; height: 36px; }
.combo { height: 27px; background: #fff; border: 1px solid #c6c6c6; display: flex; align-items: center; justify-content: flex-end; padding-right: 5px; }
.c-name { width: 151px; }
.c-size { width: 54px; border-left: 0; justify-content: space-between; padding-left: 3px; }
.big-a { position: relative; font-size: 15px; margin-left: 8px; width: 16px; }
.small-a { position: relative; font-size: 13px; margin-left: 10px; width: 14px; }
.up { position: absolute; right: 0; top: 1px; border: 2.500px solid transparent; border-bottom: 3px solid #bbb; border-top: 0; }
.s-font { height: 20px; margin-left: 11px; }
.i-clear { margin-left: 8px; }
.font-bot { display: flex; align-items: center; padding: 12px 0 0 12px; font-size: 14px; }
.font-bot b, .font-bot i, .font-bot u, .font-bot s { font-style: normal; }
.f-b { width: 10px; } .f-i { width: 10px; margin-left: 18px; font-style: italic !important; font-weight: 700; }
.f-u { width: 11px; margin-left: 14px; font-weight: 600; }
.f-s { width: 11px; margin-left: 17px; font-size: 15px; text-shadow: 1px 1px 1px #ccc; }
.f-abc { width: 20px; margin-left: 9px; font-size: 12px; }
.f-av { position: relative; margin-left: 8px; width: 18px; font-size: 13px; line-height: 14px; }
.av-line { position: absolute; left: 0; right: 0; bottom: -3px; height: 1px; background: #aaa; }
.font-bot .drop { margin-left: 6px; }
.f-aa { margin-left: 11px; width: 18px; }
.s-font2 { height: 22px; margin-left: 10px; }
.i-hl { margin-left: 3px; }
.f-color { margin-left: 8px; font-size: 16px; width: 14px; }

.para-grid { width: 195px; padding-left: 4px; flex: none; }
.para-top { display: flex; align-items: center; padding-top: 10px; height: 37px; }
.pbtn-on { width: 39px; height: 27px; background: #c6c6c6; display: flex; align-items: center; justify-content: center; }
.i-num { margin-left: 3px; }
.para-top .drop { margin-left: 4px; }
.s-p1 { height: 24px; margin-left: 7px; }
.i-ind { margin-left: 8px; }
.i-ind2 { margin-left: 8px; }
.s-p2 { height: 24px; margin-left: 8px; }
.i-ls { margin-left: 8px; }
.para-bot { display: flex; align-items: center; padding: 11px 0 0 6px; }
.al2 { margin-left: 10px; } .al3 { margin-left: 11px; } .al4 { margin-left: 11px; }
.s-p3 { height: 24px; margin-left: 9px; }
.i-col { margin-left: 8px; }
.para-bot .drop { margin-left: 5px; }
.st-para { margin-left: -3px; }

.gallery { display: flex; margin: 3px 0 0 6px; height: 76px; border: 1px solid #ababab; background: #fff; flex: none; }
.shapes { width: 158px; height: 74px; display: grid; grid-template-columns: repeat(6, 26px); grid-auto-rows: 25px; place-items: center; margin-top: -1px; }
.gal-scroll { width: 18px; display: flex; flex-direction: column; border-left: 1px solid #ccc; }
.gs { flex: 1; display: flex; align-items: center; justify-content: center; border-bottom: 1px solid #ccc; background: #fff; }
.gs:last-child { border-bottom: 0; }
.gs-dim { background: #e6e6e6; }
.b-arr { width: 62px; margin-left: 0; padding-top: 4px; }
.b-arr > svg { margin-bottom: 6px; }
.b-qs { width: 46px; margin-left: 2px; padding-top: 5px; }
.b-qs > svg { margin-bottom: 1px; }
.st-shape { margin: -2px 0 0 8px; }
.st-shape .row { height: 27px; }
.st-edit { padding-left: 9px; margin-top: -2px; }
.st-edit .row { height: 27px; }
.collapse { position: absolute; left: 1899px; top: 98px; }

.tri-up { display: block; border: 5px solid transparent; border-bottom: 5px solid #777; border-top: 0; }
.tri-dn { display: block; border: 5px solid transparent; border-top: 5px solid #777; border-bottom: 0; }
.tri-lt { display: block; border: 5px solid transparent; border-right: 5px solid #777; border-left: 0; }
.tri-rt { display: block; border: 5px solid transparent; border-left: 5px solid #777; border-right: 0; }
.gs .tri-up, .gs .tri-dn { border-width: 3px; }
.gs-dim .tri-up { border-bottom-color: #bbb; }
.bar-dn { display: block; width: 7px; height: 7px; border-top: 1px solid #777; background: linear-gradient(#777,#777) center 2px / 7px 1px no-repeat; }

/* workspace */
.workspace { height: 800px; display: flex; background: #e6e6e6; flex: none; border-bottom: 1px solid #c6c6c6; }
.sidebar { width: 292px; display: flex; flex: none; border-right: 2px solid #d6d6d6; overflow: hidden; }
.thumbs { width: 267px; padding-top: 15px; flex: none; }
.trow { height: 137px; display: flex; padding-left: 43px; position: relative; }
.num { position: absolute; left: 6px; top: -7px; font-size: 17.500px; color: #444; line-height: 28px; }
.trow-on .num { color: #c8392b; }
.thumb { position: relative; width: 200px; height: 113px; background: #fff; border: 1px solid #bfbfbf; overflow: hidden; color: #555; }
.thumb-on { width: 204px; height: 118px; margin: 0 -2px; border: 3px solid #ee6a50; top: -2px; }
.thumb-long { height: 130px; }
.th-title { font-size: 7.500px; line-height: 11px; padding: 11px 0 0 16px; color: #555; }
.th-bullet { font-size: 4.500px; padding: 7px 0 0 17px; color: #444; line-height: 7px; }
.th-code { margin: 2px 0 0 19px; width: 112px; height: 24px; background: #1d1e22; color: #8fa0b8; font-size: 2.700px; line-height: 4px; padding: 5px 0 0 6px; }
.th-lines { font-size: 3.100px; line-height: 4.600px; padding: 12px 0 0 16px; color: #444; white-space: nowrap; }
.th-list { margin: 8px 0 0; padding: 0 6px 0 20px; font-size: 4.900px; line-height: 6.300px; color: #444; white-space: nowrap; }
.th-list li + li { margin-top: 1px; }
.th-tiny { font-size: 2.500px; line-height: 3.600px; padding: 6px 0 0 14px; color: #666; }
.th-tiny mark { background: #e8e85a; color: #555; }
.mini { position: absolute; display: block; filter: blur(.4px); }
.mini-t { position: absolute; left: 44px; top: 41px; font-size: 2.800px; font-weight: 700; color: #444; }
.mini-c { position: absolute; left: 92px; top: 87px; font-size: 2.600px; font-style: italic; color: #555; }
.m-y { left: 58px; top: 49px; width: 25px; height: 11px; background: #ffd666; }
.m-o { left: 104px; top: 49px; width: 20px; height: 11px; background: #f4b183; }
.m-g { left: 133px; top: 49px; width: 18px; height: 33px; background: #add08c; }
.m-b { left: 106px; top: 66px; width: 19px; height: 14px; background: #9dc3e6; }
.m-s { left: 84px; top: 66px; width: 17px; height: 13px; background: #bebdc0; }
.m-d { left: 60px; top: 67px; width: 19px; height: 14px; background: #8497b0; }
.th-dense { margin: 13px 0 0; padding: 0 10px 0 20px; font-size: 3.400px; line-height: 4.100px; color: #333; }
.th-dense li + li { margin-top: 1px; }

.vbar { position: relative; width: 19px; flex: none; background: #dcdbdd; display: flex; flex-direction: column; }
.vbar-side { margin: 3px 0 3px; height: 794px; }
.sbtn { width: 19px; height: 18px; background: #fff; border: 1px solid #c6c6c6; display: flex; align-items: center; justify-content: center; flex: none; }
.sthumb { display: block; width: 19px; height: 151px; background: #fff; border: 1px solid #c6c6c6; margin-top: 442px; flex: none; }
.sb-dn { margin-top: auto; }

.editor { flex: 1; min-width: 0; display: flex; flex-direction: column; }
.editor-top { display: flex; height: 760px; flex: none; }
.canvas { position: relative; width: 1593px; height: 760px; background: #fff; border-right: 2px solid #c6c6c6; border-bottom: 2px solid #c6c6c6; overflow: hidden; flex: none; }
.vbar-main { margin: 3px 0 0 15px; height: 757px; background: linear-gradient(#dcdbdd,#dcdbdd) 0 0 / 19px 707px no-repeat; }
.st-main { height: 22px; margin-top: 507px; }
.vbar-main .sb-dn { margin-top: 160px; }
.dbl { position: relative; margin: 9px 0 0 4px; }
.d-first { margin-top: 6px; }

.hbar { display: flex; margin: 14px 0 0 3px; height: 18px; width: 1601px; flex: none; }
.sh { flex: none; }
.htrack { width: 276px; background: #dcdbdd; }
.hthumb { flex: 1; background: #fff; border: 1px solid #b5b5b5; }

.d-title { position: absolute; left: 96px; top: 78px; margin: 0; font: 700 25.660px/34px "Roboto", "Liberation Sans", sans-serif; color: #1e2b38; white-space: nowrap; }
.d-arrows { position: absolute; left: 0; top: 0; }
.node { position: absolute; text-align: center; font-size: 16.500px; font-weight: 600; color: #1e2a36; line-height: 24.500px; }
.node p { margin: 0; }
.node .lt { color: #fdf6e6; font-weight: 400; }
.node .gap { margin-bottom: 14px; }
.node .left { text-align: left; padding-left: 14px; }
.n-route { left: 234px; top: 165px; width: 239px; height: 103px; background: #ffd666; padding-top: 8px; }
.n-route .gap { margin-bottom: 13px; }
.n-ctrl { left: 682px; top: 165px; width: 198px; height: 102px; background: #f4b183; padding-top: 8px; }
.n-action { left: 973px; top: 166px; width: 172px; height: 324px; background: #add08c; padding-top: 67px; }
.n-action .gap { margin-bottom: 13.500px; }
.n-filter { left: 705px; top: 331px; width: 192px; height: 140px; background: #9dc3e6; padding-top: 12px; }
.n-view { left: 485px; top: 330px; width: 165px; height: 103px; background: #bebdc0; padding-top: 8px; }
.n-view .gap { margin-bottom: 13px; }
.n-view .left { font-size: 16px; }
.n-exec { left: 246px; top: 346px; width: 188px; height: 130px; background: #8497b0; padding-top: 22px; }
.d-other { position: absolute; left: 492px; top: 443px; font-size: 16px; line-height: 26px; color: #2a2a2a; white-space: nowrap; }
.d-cap { position: absolute; left: 560px; top: 522px; font: italic 400 18.700px/26px "Roboto", sans-serif; color: #2a3540; white-space: nowrap; }
.d-cursor { position: absolute; left: 1024px; top: 571px; }

/* status */
.status { height: 28px; background: #f2f2f2; display: flex; align-items: center; font-size: 12.700px; color: #444; flex: none; padding-left: 8px; }
.st-slide { width: 100px; flex: none; }
.i-spell { margin-right: 18px; }
.st-lang { width: 1189px; flex: none; white-space: nowrap; }
.st-notes, .st-comments { display: flex; align-items: center; gap: 7px; flex: none; }
.st-notes { width: 54px; }
.st-comments { margin-left: 21px; gap: 3px; width: 83px; }
.vw { width: 42.500px; height: 28px; display: flex; align-items: center; justify-content: center; flex: none; }
.vw-on { background: #c6c6c6; margin-left: 21px; }
.z-minus { width: 9px; height: 2px; background: #666; margin-left: 4px; flex: none; }
.z-slider { position: relative; width: 126px; height: 1px; background: #aaa; margin-left: 3px; flex: none; }
.z-tick { position: absolute; left: 63px; top: -3px; width: 1px; height: 7px; background: #888; }
.z-knob { position: absolute; left: 65px; top: -6px; width: 6px; height: 13px; background: #666; }
.z-plus { width: 11px; height: 11px; margin-left: 3px; flex: none; background: linear-gradient(#555,#555) center / 11px 2px no-repeat, linear-gradient(#555,#555) center / 2px 11px no-repeat; }
.z-pct { margin-left: 13px; font-size: 12.500px; width: 47px; flex: none; }
.strip { height: 7px; background: linear-gradient(90deg, #e9eff4, #dde9f3); flex: none; }

/* meeting bar */
.meet { height: 53px; background: #1a1a1a; display: flex; padding-left: 10px; flex: none; color: #b4b4b4; font-size: 11.500px; }
.tool { position: relative; width: 70px; display: flex; flex-direction: column; align-items: center; flex: none; }
.tool > svg { height: 24px; margin-top: 5px; }
.tool > span { position: absolute; top: 31px; line-height: 18px; white-space: nowrap; }
.caret { position: absolute; top: 16px; width: 6px; height: 6px; border-left: 1.500px solid #aaa; border-top: 1.500px solid #aaa; transform: rotate(45deg) scale(.8); }
.c-m { left: 65px; }
.c-p { left: 85px; }
.c-c { left: 65px; }
.count { position: absolute; left: 51px; top: 6px; font-style: normal; font-size: 12px; }
.t-video { margin-left: 23px; }
.t-part { margin-left: 582px; }
.t-part > svg { margin-left: -3px; }
.t-chat { margin-left: 40px; }
.t-share { margin-left: 18px; width: 80px; color: #22d95c; }
.t-rec { margin-left: 14px; }
.t-react { margin-left: 11px; }
.t-apps { margin-left: 10px; }
.leave { margin: 13px 12px 0 auto; width: 61px; height: 27px; border: 0; border-radius: 8px; background: #b3262a; color: #fff; font: 700 12px "Open Sans", sans-serif; padding: 0; }

/* overlays */
.ov-shield { position: absolute; left: 8px; top: 8px; width: 24px; height: 24px; background: #3a2622; border-radius: 4px; display: flex; align-items: center; justify-content: center; }
.ov-rec { position: absolute; left: 46px; top: 11px; display: flex; align-items: center; gap: 5px; color: #fff; font-size: 12px; line-height: 18px; }
.rec-dot { width: 12px; height: 12px; border-radius: 50%; background: radial-gradient(#f0a098, #c8403a); }
.ov-banner { position: absolute; left: 752px; top: 0; height: 22px; display: flex; font-size: 12px; line-height: 22px; border-radius: 0 0 4px 4px; overflow: hidden; }
.bn-msg { width: 295px; background: #22d95c; color: #123a24; text-align: center; font-weight: 600; font-size: 11.700px; }
.bn-opt { width: 121px; background: #1e1f24; color: #fff; display: flex; align-items: center; padding-left: 16px; gap: 16px; font-weight: 600; font-size: 11.500px; }
.ov-view { position: absolute; left: 1857px; top: 8px; width: 55px; height: 33px; padding-bottom: 8px; background: rgba(90,40,30,.5); border-radius: 6px; display: flex; align-items: center; padding-left: 6px; gap: 5px; color: #fff; font-size: 12px; }
.ov-x { position: absolute; left: 28px; top: 8px; }
.ov-pen { position: absolute; left: 12px; top: 976px; width: 40px; height: 40px; border-radius: 50%; background: #2b2f33; display: flex; align-items: center; justify-content: center; opacity: .97; }
```
